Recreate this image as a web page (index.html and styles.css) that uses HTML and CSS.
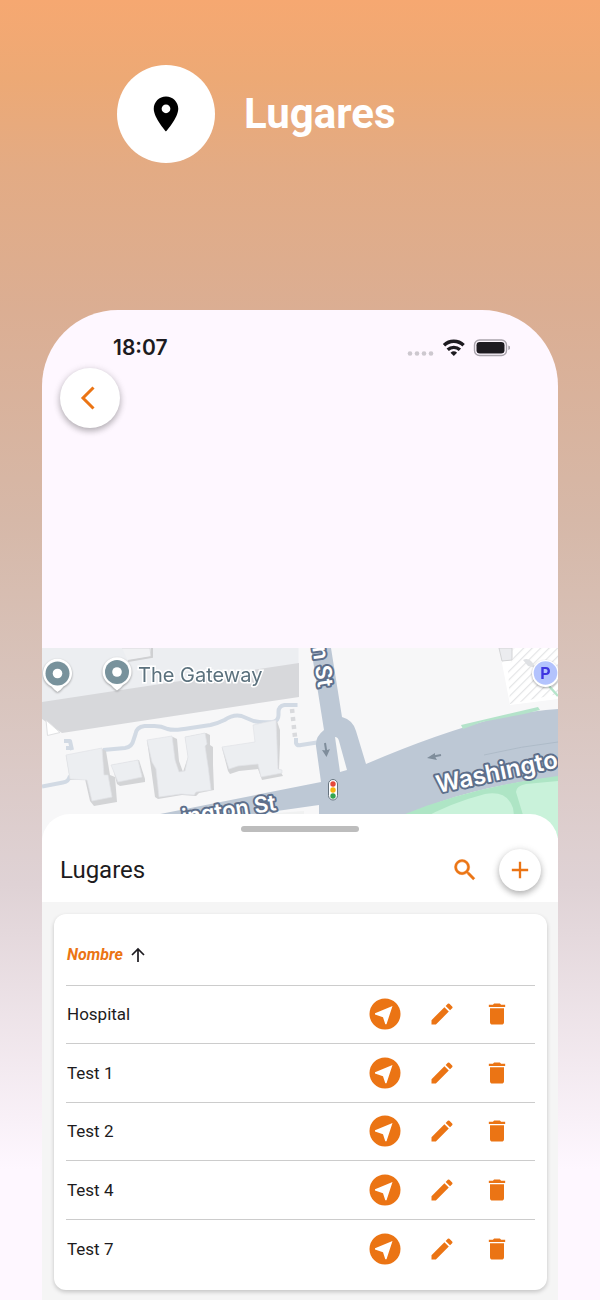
FILE: index.html
```html
<!DOCTYPE html>
<html lang="es">
<head>
<meta charset="utf-8">
<meta name="viewport" content="width=device-width, initial-scale=1">
<title>Lugares</title>
<link rel="stylesheet" href="styles.css">
</head>
<body>
<svg width="0" height="0" class="sprite" aria-hidden="true">
  <symbol id="near" viewBox="0 0 32 32"><circle cx="16" cy="16" r="15.500" fill="currentColor"/><path d="M23.500 8 6 15.200v1.200l8 2.800 2.300 7h1.200z" fill="#fff"/></symbol>
  <symbol id="edit" viewBox="0 0 24 24"><path fill="currentColor" d="M3 17.250V21h3.750L17.810 9.940l-3.750-3.750L3 17.250zM20.710 7.040a1 1 0 0 0 0-1.410l-2.340-2.340a1 1 0 0 0-1.410 0l-1.830 1.830 3.750 3.750 1.830-1.830z"/></symbol>
  <symbol id="trash" viewBox="0 0 24 24"><path fill="currentColor" d="M6 19c0 1.100.9 2 2 2h8c1.100 0 2-.9 2-2V7H6v12zM19 4h-3.500l-1-1h-5l-1 1H5v2h14V4z"/></symbol>
</svg>
<main class="page">
  <header class="hero">
    <span class="hero-badge">
      <svg width="42" height="42" viewBox="0 0 24 24" aria-hidden="true"><path d="M12 2C8.130 2 5 5.130 5 9c0 5.250 7 13 7 13s7-7.750 7-13c0-3.870-3.130-7-7-7zm0 9.500a2.500 2.500 0 0 1 0-5 2.500 2.500 0 0 1 0 5z"/></svg>
    </span>
    <h1 class="hero-title">Lugares</h1>
  </header>

  <section class="phone">
    <div class="status">
      <span class="time">18:07</span>
      <svg width="104" height="24" viewBox="0 0 104 24" aria-hidden="true">
        <g fill="#cdc8cf"><circle cx="4" cy="17.500" r="2.300"/><circle cx="11" cy="17.500" r="2.300"/><circle cx="18" cy="17.500" r="2.300"/><circle cx="25" cy="17.500" r="2.300"/></g>
        <g fill="none" stroke="#1d1b20" stroke-width="3.400"><path d="M38 9.300a14 14 0 0 1 19.600 0"/><path d="M41.700 13.800a9 9 0 0 1 12.200 0"/></g>
        <path d="M44.500 16.700a5 5 0 0 1 6.600 0l-3.300 3.200z" fill="#1d1b20"/>
        <rect x="68.500" y="4" width="32" height="15.500" rx="5" fill="none" stroke="#a9a4ac" stroke-width="1.400"/>
        <rect x="70.500" y="6" width="28" height="11.500" rx="3.300" fill="#1d1b20"/>
        <path d="M102.300 9.500q2 .6 2 2.200t-2 2.200z" fill="#a9a4ac"/>
      </svg>
    </div>
    <div class="toolbar">
      <button class="round back" aria-label="Volver">
        <svg width="30" height="30" viewBox="0 0 30 30" fill="none" stroke="currentColor" stroke-width="3"><path d="M18.500 4.500 8 15l10.500 10.500"/></svg>
      </button>
    </div>

    <svg class="map" viewBox="42 648 516 190" preserveAspectRatio="xMidYMid slice" role="img" aria-label="Mapa">
      <defs>
        <pattern id="hatch" width="6" height="6" patternUnits="userSpaceOnUse" patternTransform="rotate(45)"><path d="M0 0V6" stroke="#e3e4e6" stroke-width="2.400"/></pattern>
      </defs>
      <path fill="#f7f7f8" d="M42 648h516v190H42z"/>
      <path fill="#eceef1" d="M42 648h256.500v16L42 704z"/>
      <path fill="#d7d8db" d="M42 702 299 663v34L62 733l-20-14z"/>
      <path fill="#fff" stroke="#dfe0e2" d="m46 720 14 12.500-12.500 3z"/>
      <path fill="#f0f1f3" stroke="#d9dadd" d="M122 648h28l1 9-23 4"/>
      <path d="M128 661l24-4v-9" fill="none" stroke="#cfd0d2" stroke-width="2"/>
      <g fill="none" stroke="#d2dae4" stroke-width="4" stroke-linejoin="round">
        <path d="M42 786.500l21-4q6-1 7-7M103 750l22-2q7-1 8.500-8l2-6q1-7 9-8h10q7 0 13 3 7 2 23-1l20-3q8-2 14-5 9-6 17-4l12 5q8 2 19 1 6-1 6-7v-3q0-6 6-7h13M296 738v5q1 3 5 2l16-2.500"/>
        <path d="M64 741h6l2 9M66 748h6"/>
      </g>
      <path d="m292 709 3 28" stroke="#d9dadd" stroke-width="4.500" stroke-dasharray="4 4"/>
      <g fill="#d3d4d6">
        <path d="m66 756 36-7 4 2 4 24 5 2 2 25-23 4-4-5-5-22-15 1z"/>
        <path d="m112 765 27-5 6 19v3l-25 4-3-2z"/>
        <path d="m147 741 26-4 4 2 2 22 4 11 5-15-3-20 21-4 4 2v10l3 2v18l1 25-15 3-3 3-14-1-24 4-3-2-4-29z"/>
        <path d="m222 748 33-5 22-22 3 9v14l-1 25 4 7-21 4-4-11-19 2-9 3-2-3z"/>
      </g>
      <g fill="#eceef1" stroke="#e1e3e6" stroke-width=".7">
        <path d="m66 755 36-7 2 27h4l4 22-20 4-5-21-17-1z"/>
        <path d="m111 765 27-5 4 17-24 5z"/>
        <path d="m147 740 25-4 3 24 4 12 6-1 3-14-3-20 20-4 2 11-2 2 3 20 3 24-15 2-2 3-13-1-22 3-3-28-4-7z"/>
        <path d="m222 747 33-5-2-17 23-5 2 49 4 1v3l-21 4-3-13-20 2-9 3z"/>
      </g>
      <path fill="#f0f1f1" d="M276 813l28-2v6h-28z"/>
      <path fill="#bdc8d5" d="M311 648h20l11 69q11 3 14 14l10 33q72-31 134-47 30-6 58-8v68q-70 8-118 25l-30 12-12 24h-79v-33l-119 17-60 14v-18l181-36-5-36q-1-9 8-16z"/>
      <path d="M484 755q38-9 74-13" stroke="#aebbc8" stroke-width="1" fill="none"/>
      <path fill="#f7f8f8" d="M335 737q3 0 4 4l8 29-7 2z"/>
      <path fill="#b4e3ca" d="m461 725 77-18 2 3-16 4-42 8-19 7z"/>
      <path fill="#aee5c5" d="M400 816q70-29 158-40v62H400z"/>
      <path fill="#c9f2da" d="M420 820q30-17 65-26 22-4 28 14l4 30h-97zM516 792q0-6 10-8l32-3v57h-28z"/>
      <path fill="#fff" d="M502 663l13-15h43v51l-48 6z"/>
      <path fill="url(#hatch)" d="M508 668l10-20h40v46l-48 10z"/>
      <path fill="#ebecef" stroke="#d3d4d6" d="M499 648h13v12l-10 1z"/>
      <path fill="#dfe1e4" d="M523 660q5-3 9 2l4 6-8-2z"/>
      <path d="M549 686l9 10" stroke="#b7e5cc" stroke-width="2.500"/>
      <g fill="none" stroke="#7f8d9b" stroke-width="2"><path d="M325 743l1.500 10M441 755l-10 2"/></g>
      <path fill="#7f8d9b" d="m322 750 4.500 7 3.500-8-4 1.500zM427 758l8-5v3.500l2 3.500z"/>
      <g class="road-label">
        <text class="road-main" transform="translate(438 793) rotate(-12)">Washingto</text>
        <text transform="translate(277 810) rotate(-9)" text-anchor="end">ington St</text>
        <text transform="translate(318 688) rotate(82)" text-anchor="end">n St</text>
      </g>
      <rect x="328.500" y="779.500" width="9" height="20.500" rx="4.500" fill="#fff" stroke="#66737f" stroke-width="1"/>
      <circle cx="333" cy="784" r="2.700" fill="#e5483a"/><circle cx="333" cy="790" r="2.700" fill="#f7b50c"/><circle cx="333" cy="796" r="2.700" fill="#34a550"/>
      <g class="pins">
        <g id="pin"><path d="M57.500 692q-3-2-6-5.500a14.500 14.500 0 1 1 12 0q-3 4-6 5.500z" fill="#fff"/><circle cx="57.500" cy="673.500" r="12" fill="#78929c"/><circle cx="57.500" cy="673.500" r="4.800" fill="#fff"/></g>
        <use href="#pin" x="59.500" y="-1.500"/>
        <circle cx="545.500" cy="673.500" r="13.500" fill="#fff"/>
      </g>
      <text class="poi" x="138" y="682">The Gateway</text>
      <circle cx="545.500" cy="673" r="11.800" fill="#b3c3fd"/>
      <text class="parking" x="545.500" y="679" text-anchor="middle">P</text>
    </svg>

    <section class="sheet">
      <div class="handle"></div>
      <div class="sheet-head">
        <h2 class="sheet-title">Lugares</h2>
        <button class="plain" aria-label="Buscar"><svg width="28" height="28" viewBox="0 0 24 24"><path fill="currentColor" stroke="currentColor" stroke-width=".4" d="M15.500 14h-.79l-.28-.27A6.471 6.471 0 0 0 16 9.500 6.500 6.500 0 1 0 9.500 16c1.610 0 3.090-.59 4.230-1.570l.27.28v.79l5 4.990L20.490 19l-4.990-5zm-6 0C7.010 14 5 11.990 5 9.500S7.010 5 9.500 5 14 7.010 14 9.500 11.990 14 9.500 14z"/></svg></button>
        <button class="round add" aria-label="Añadir"><svg width="28" height="28" viewBox="0 0 24 24"><path fill="currentColor" d="M19 13h-6v6h-2v-6H5v-2h6V5h2v6h6v2z"/></svg></button>
      </div>
      <div class="sheet-body">
        <div class="card">
          <table class="places">
            <thead>
              <tr><th colspan="2" scope="col" aria-sort="ascending"><button class="sort">Nombre <svg width="18" height="18" viewBox="0 0 18 18" fill="none" stroke="#1d1b20" stroke-width="1.700"><path d="M9 16V3M3 9l6-6 6 6"/></svg></button></th></tr>
            </thead>
            <tbody>
              <tr><td>Hospital</td><td><div class="actions"><button class="plain" aria-label="Ir a Hospital"><svg width="32" height="32"><use href="#near"/></svg></button><button class="plain" aria-label="Editar Hospital"><svg width="28" height="28"><use href="#edit"/></svg></button><button class="plain" aria-label="Eliminar Hospital"><svg width="28" height="28"><use href="#trash"/></svg></button></div></td></tr>
              <tr><td>Test 1</td><td><div class="actions"><button class="plain" aria-label="Ir a Test 1"><svg width="32" height="32"><use href="#near"/></svg></button><button class="plain" aria-label="Editar Test 1"><svg width="28" height="28"><use href="#edit"/></svg></button><button class="plain" aria-label="Eliminar Test 1"><svg width="28" height="28"><use href="#trash"/></svg></button></div></td></tr>
              <tr><td>Test 2</td><td><div class="actions"><button class="plain" aria-label="Ir a Test 2"><svg width="32" height="32"><use href="#near"/></svg></button><button class="plain" aria-label="Editar Test 2"><svg width="28" height="28"><use href="#edit"/></svg></button><button class="plain" aria-label="Eliminar Test 2"><svg width="28" height="28"><use href="#trash"/></svg></button></div></td></tr>
              <tr><td>Test 4</td><td><div class="actions"><button class="plain" aria-label="Ir a Test 4"><svg width="32" height="32"><use href="#near"/></svg></button><button class="plain" aria-label="Editar Test 4"><svg width="28" height="28"><use href="#edit"/></svg></button><button class="plain" aria-label="Eliminar Test 4"><svg width="28" height="28"><use href="#trash"/></svg></button></div></td></tr>
              <tr><td>Test 7</td><td><div class="actions"><button class="plain" aria-label="Ir a Test 7"><svg width="32" height="32"><use href="#near"/></svg></button><button class="plain" aria-label="Editar Test 7"><svg width="28" height="28"><use href="#edit"/></svg></button><button class="plain" aria-label="Eliminar Test 7"><svg width="28" height="28"><use href="#trash"/></svg></button></div></td></tr>
            </tbody>
          </table>
        </div>
      </div>
    </section>
  </section>
</main>
</body>
</html>
```
FILE: styles.css
```css
* { box-sizing: border-box; }
body { margin: 0; font-family: Roboto, sans-serif; color: #1d1b20; }
svg { display: block; flex: none; }
.sprite { position: absolute; }
button { font: inherit; color: #eb7414; border: 0; padding: 0; background: none; cursor: pointer; }

.page {
  min-height: 100vh;
  display: flex;
  flex-direction: column;
  padding: 65px 42px 0;
  background: linear-gradient(#f6a871 0%, #eda975 6%, #e3ab84 13%, #dbae93 24%, #d6b8a8 40%, #d8c3bb 52%, #dfd2d5 68%, #fef7ff 90%);
}
.hero { display: flex; align-items: center; gap: 29px; padding-left: 75px; margin-bottom: 147px; }
.hero-badge { width: 98px; height: 98px; border-radius: 50%; background: #fff; display: grid; place-items: center; }
.hero-title { margin: 0; font-size: 42px; line-height: 48px; font-weight: 700; color: #fff; }

.phone { flex: 1; display: flex; flex-direction: column; background: #fef7ff; border-radius: 76px 76px 0 0; overflow: hidden; }
.status { display: flex; align-items: center; justify-content: space-between; padding: 26px 48px 0 71px; }
.time { font: 600 21px/24px Inter, sans-serif; }
.toolbar { height: 288px; padding: 8px 18px; }
.round { display: grid; place-items: center; border-radius: 50%; background: #fff; box-shadow: 0 3px 6px rgba(0, 0, 0, .25), 0 1px 8px rgba(0, 0, 0, .1); }
.back { width: 60px; height: 60px; }

.map { width: 100%; height: 190px; }
.road-label { font: 600 22px Inter, sans-serif; fill: #fff; stroke: #5d6f8b; stroke-width: 4px; stroke-linejoin: round; paint-order: stroke; }
.road-main { font-size: 24px; }
.pins { filter: drop-shadow(0 1px 1px rgba(0, 0, 0, .35)); }
.poi { font: 400 20px Inter, sans-serif; fill: #5b717d; stroke: #fff; stroke-width: 3px; paint-order: stroke; }
.parking { font: 700 16px Inter, sans-serif; fill: #3f36e0; }

.sheet { flex: 1; display: flex; flex-direction: column; position: relative; margin-top: -24px; border-radius: 28px 28px 0 0; background: #fff; }
.handle { width: 118px; height: 6px; margin: 12px auto 0; border-radius: 3px; background: #bdbdbd; }
.sheet-head { display: flex; align-items: center; height: 70px; padding: 6px 17px 0 18px; gap: 20px; }
.sheet-title { flex: 1; margin: 0; font-size: 24px; line-height: 28px; font-weight: 400; }
.add { width: 42px; height: 42px; }
.sheet-body { flex: 1; padding: 12px 11px 10px 12px; background: #f5f5f5; }

.card { padding: 12px; border-radius: 12px; background: #fff; box-shadow: 0 2px 4px rgba(0, 0, 0, .2); }
.places { width: 100%; height: 352px; border-collapse: collapse; font-size: 17px; line-height: 20px; }
.places th, .places td { height: 58px; padding: 0 1px; text-align: left; }
.places th { height: 59px; }
.places tbody tr { border-top: 1px solid #ccc; }
.sort { display: flex; align-items: center; gap: 6px; font-size: 16px; font-weight: 700; font-style: italic; }
.plain { display: grid; place-items: center; }
.actions { display: flex; justify-content: flex-end; gap: 27px; padding-right: 23px; }
```
